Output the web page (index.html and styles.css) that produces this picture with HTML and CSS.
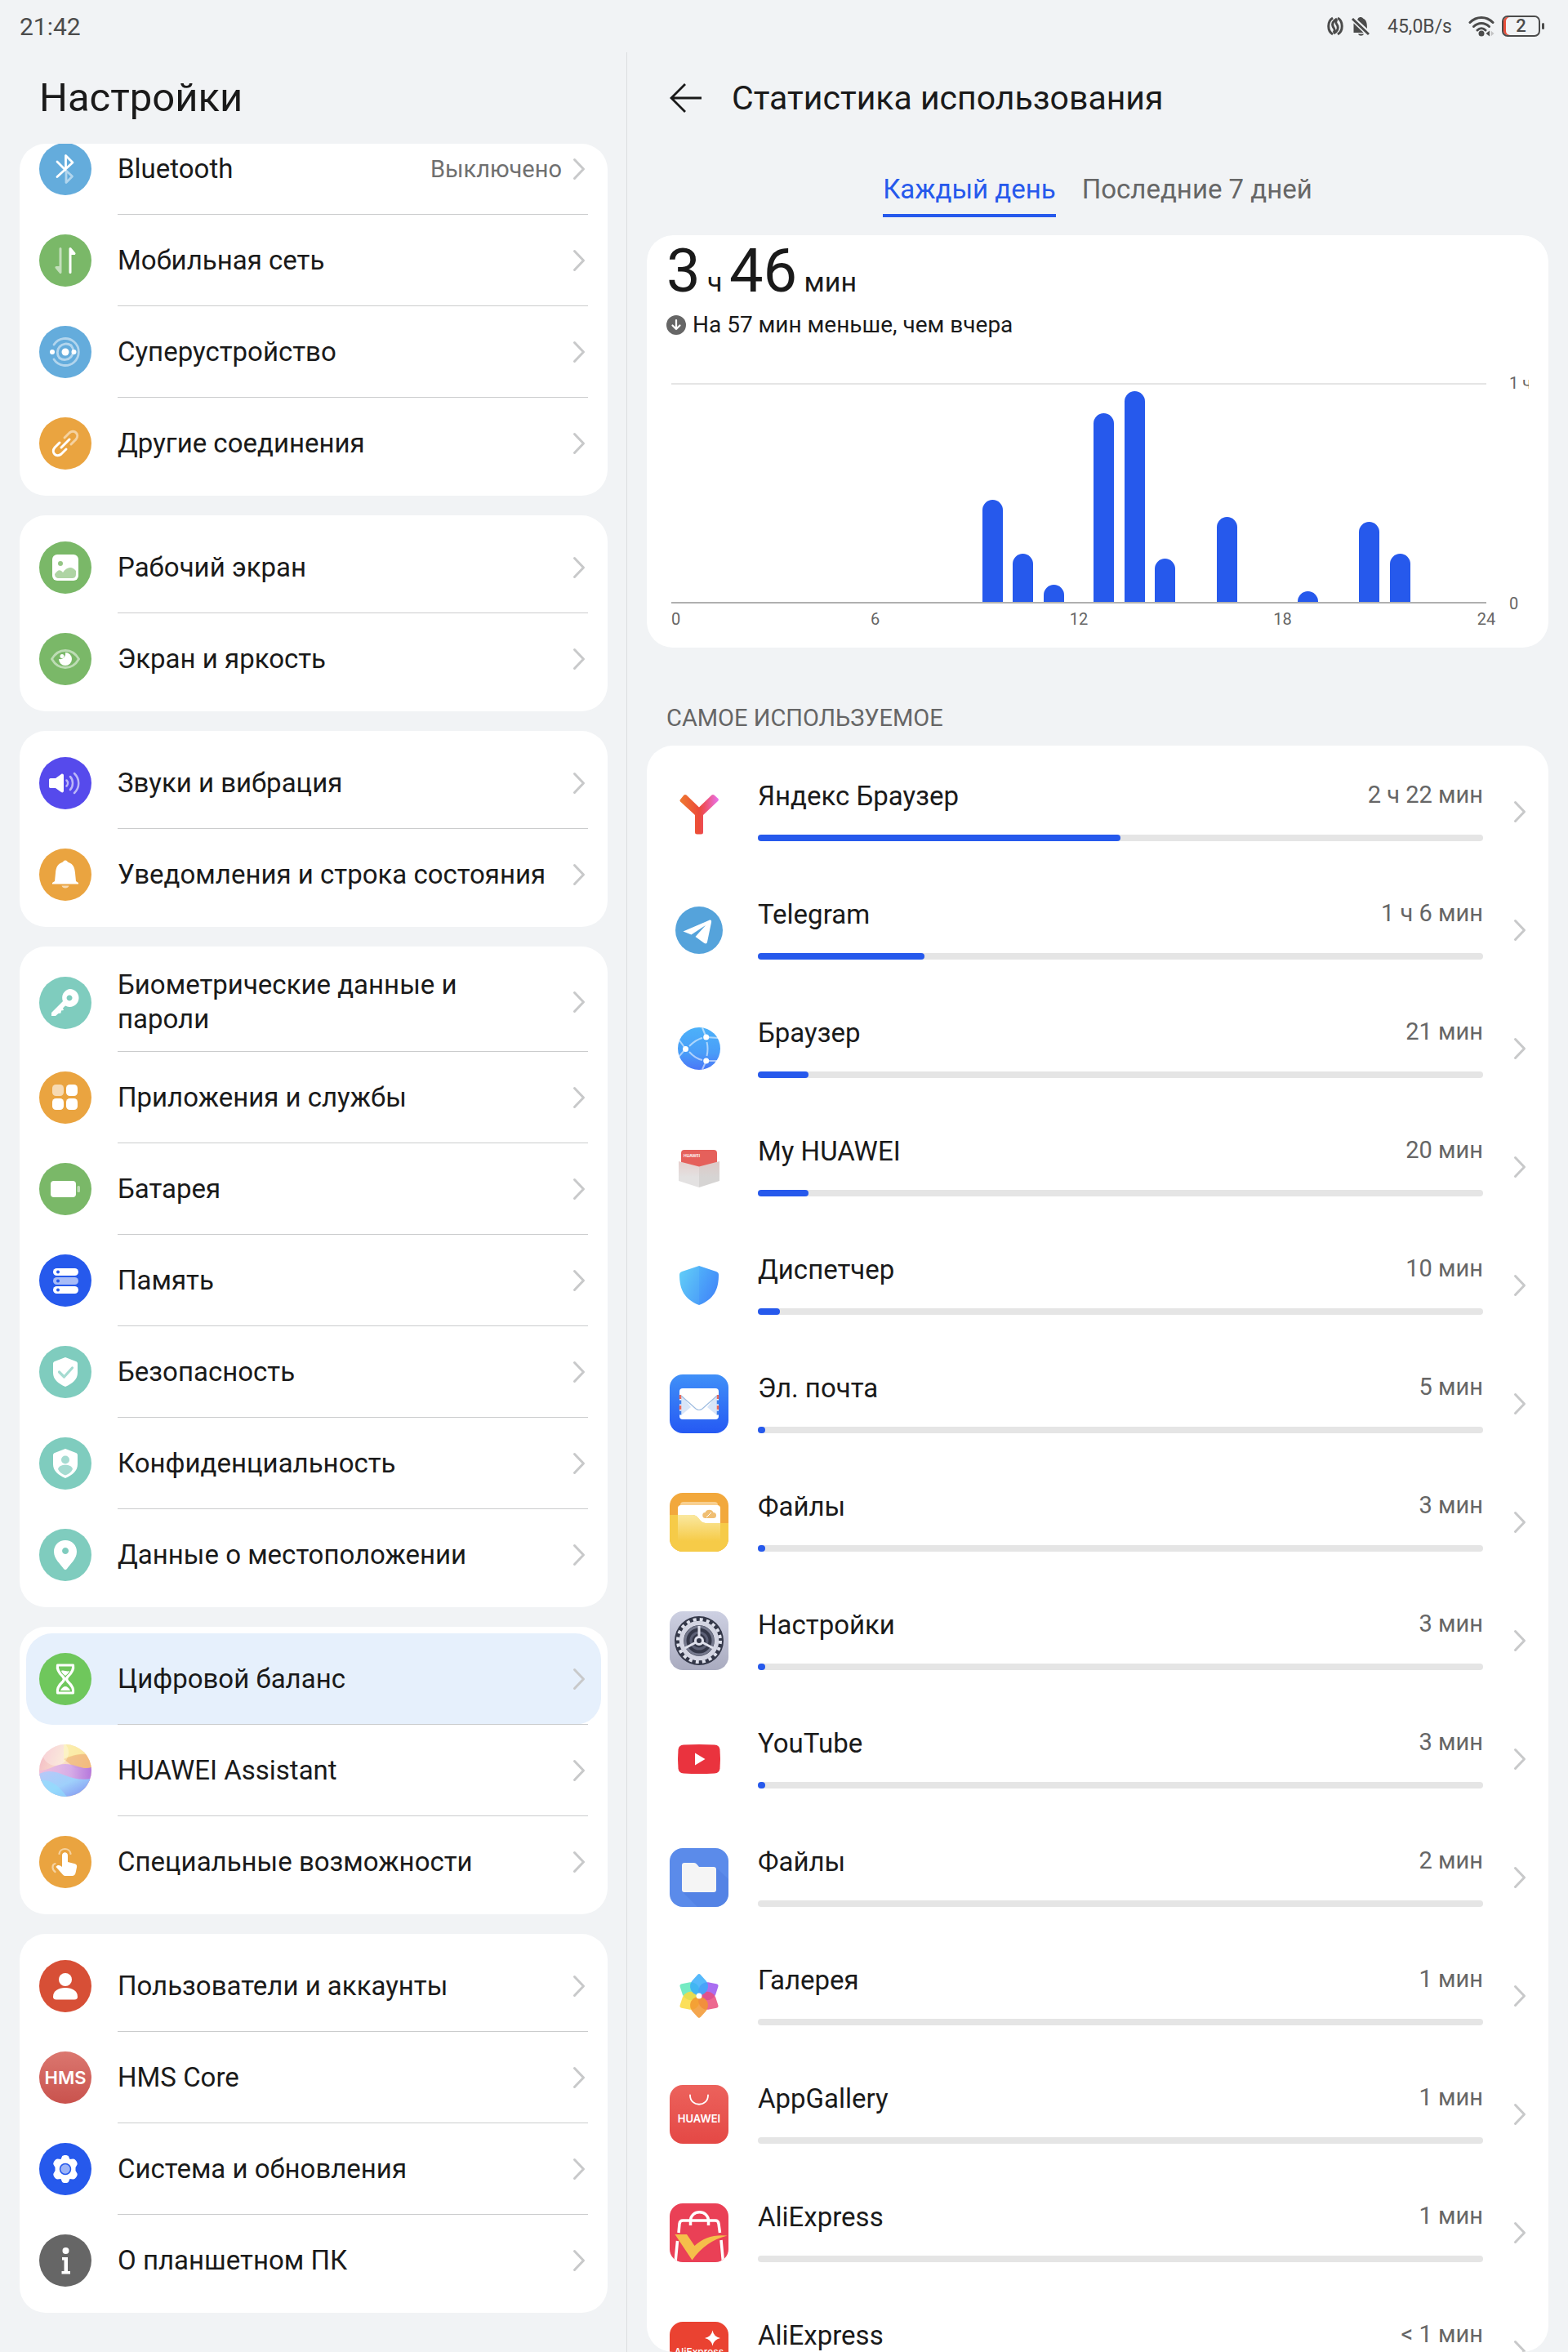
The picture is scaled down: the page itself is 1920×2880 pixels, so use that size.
FILE: index.html
```html
<!DOCTYPE html>
<html lang="ru">
    <head>
        <meta charset="utf-8">
        <meta name="viewport" content="width=device-width, initial-scale=1">
        <title>Настройки</title>
        <link rel="stylesheet" href="styles.css">
    </head>
    <body>
        <header class="status-bar">
            <div class="time">21:42</div>
            <div class="status-icons">
                <svg class="status-nfc" viewBox="0 0 20 24">
                    <path d="M7 2C0 6 0 18 7 22M13 2c7 4 7 16 0 20M12 3C7 6 6 9 7 12s4 4 1 8M8 21c5-3 6-6 5-9S9 8 12 4" fill="none" stroke="#4b4b4b" stroke-width="3"/>
                </svg>
                <svg class="status-bell" viewBox="0 0 22 24">
                    <path d="M2.500 20V8.500L14.500 20zM8 2.500c1-2 5-2 6 0 4 2 5 5 5 12.500L7 4zM8 21.500h7c-1 3-6 3-7 0z" fill="#4b4b4b"/>
                    <path d="M1 3l20 19" stroke="#4b4b4b" stroke-width="3"/>
                </svg>
                <div class="speed">45,0B/s</div>
                <svg class="status-wifi" viewBox="0 0 32 26">
                    <path d="M2 8.5c8-8 20-8 28 0M6.5 13.500c5.500-5.500 13.500-5.500 19 0M11 18c3-3 7-3 10 0" fill="none" stroke="#4b4b4b" stroke-width="3" stroke-linecap="round"/>
                    <circle cx="16" cy="22" r="3.500" fill="#4b4b4b"/>
                    <path d="M26 18.500v7L21.500 22z" fill="#4b4b4b"/>
                    <path d="M27.500 18.500v7L31.500 22z" fill="#c3c3c4"/>
                </svg>
                <div class="battery"><span>2</span></div>
            </div>
        </header>

        <div class="panes">
            <aside class="sidebar">
                <h1>Настройки</h1>
                <nav class="scroller">
                    <ul class="group scrolled">
                        <li><a href="#bluetooth" class="row">
                            <svg class="round" viewBox="0 0 64 64"><circle cx="32" cy="32" r="32" fill="#64acdc"/>
                                <g fill="none" stroke="#fff" stroke-width="2.800" stroke-linecap="round" stroke-linejoin="round"><path d="M22 23l10 10M22 41.500l19-17.500-8.500-8.500V31"/><path d="M33 34l7.500 7-7.500 7.500V36" opacity=".5"/></g></svg>
                            <span class="row-body"><span class="label">Bluetooth</span><span class="value">Выключено</span><svg class="chevron"><use href="#chevron"/></svg></span>
                        </a></li>
                        <li><a href="#mobile" class="row">
                            <svg class="round" viewBox="0 0 64 64"><circle cx="32" cy="32" r="32" fill="#7ab868"/>
                                <path d="M26 17.500v29l-5-6h5" fill="#fff" stroke="#fff" stroke-width="3" stroke-linecap="round" stroke-linejoin="round" opacity=".55"/>
                                <path d="M38 46.500v-29l5 6h-5" fill="#fff" stroke="#fff" stroke-width="3" stroke-linecap="round" stroke-linejoin="round"/></svg>
                            <span class="row-body"><span class="label">Мобильная сеть</span><svg class="chevron"><use href="#chevron"/></svg></span>
                        </a></li>
                        <li><a href="#super" class="row">
                            <svg class="round" viewBox="0 0 64 64"><circle cx="32" cy="32" r="32" fill="#64acdc"/>
                                <g fill="none" stroke="#fff" stroke-width="2.800" opacity=".5" stroke-linecap="round"><path d="M18 23a16.500 16.500 0 1 1 0 18"/><path d="M25 39.500a10.500 10.500 0 0 1 14-15.500"/><path d="M39 24a10.500 10.500 0 0 1-14 15.500"/></g>
                                <circle cx="32" cy="32" r="4.500" fill="#fff"/><circle cx="16" cy="32" r="3" fill="#fff"/><circle cx="42.500" cy="32" r="3" fill="#fff"/></svg>
                            <span class="row-body"><span class="label">Суперустройство</span><svg class="chevron"><use href="#chevron"/></svg></span>
                        </a></li>
                        <li><a href="#connections" class="row">
                            <svg class="round" viewBox="0 0 64 64"><circle cx="32" cy="32" r="32" fill="#eaa440"/>
                                <g fill="none" stroke="#fff" stroke-width="3" stroke-linecap="round"><path d="M31 25l6-6c6-5 13 2 8 8l-6 6" opacity=".5"/><path d="M25 31l-6 6c-5 6 2 13 8 8l6-6M27 37l10-10"/></g></svg>
                            <span class="row-body"><span class="label">Другие соединения</span><svg class="chevron"><use href="#chevron"/></svg></span>
                        </a></li>
                    </ul>

                    <ul class="group">
                        <li><a href="#desktop" class="row">
                            <svg class="round" viewBox="0 0 64 64"><circle cx="32" cy="32" r="32" fill="#7ab868"/>
                                <rect x="16" y="16" width="32" height="32" rx="6" fill="#fff"/><circle cx="26" cy="27" r="3" fill="#7ab868" opacity=".8"/>
                                <path d="M19 40c4-6 7-6 10-2 5-7 11-8 16-2v4c0 4-2 5-5 5H24c-3 0-5-2-5-5z" fill="#7ab868" opacity=".6"/></svg>
                            <span class="row-body"><span class="label">Рабочий экран</span><svg class="chevron"><use href="#chevron"/></svg></span>
                        </a></li>
                        <li><a href="#display" class="row">
                            <svg class="round" viewBox="0 0 64 64"><circle cx="32" cy="32" r="32" fill="#7ab868"/>
                                <path d="M15.500 32c8-14 25-14 33 0-8 14-25 14-33 0z" fill="none" stroke="#fff" stroke-width="2.800" opacity=".5"/>
                                <path d="M32 24a8 8 0 1 1-8 8c5 1 9-3 8-8z" fill="#fff"/><circle cx="28" cy="28.500" r="2.500" fill="#fff"/></svg>
                            <span class="row-body"><span class="label">Экран и яркость</span><svg class="chevron"><use href="#chevron"/></svg></span>
                        </a></li>
                    </ul>

                    <ul class="group">
                        <li><a href="#sound" class="row">
                            <svg class="round" viewBox="0 0 64 64"><circle cx="32" cy="32" r="32" fill="#564aec"/>
                                <path d="M14 26h6l7-5c1.500-1 3 0 3 1.500v19c0 1.500-1.500 2.500-3 1.500l-7-5h-6c-1.500 0-2-1-2-2v-8c0-1 .5-2 2-2z" fill="#fff"/>
                                <g fill="none" stroke="#fff" stroke-width="2.500" stroke-linecap="round" opacity=".6"><path d="M33.500 28.500c2 2 2 5 0 7M38 24c4 4 4 12 0 16M43 20c7 7 7 17 0 24"/></g></svg>
                            <span class="row-body"><span class="label">Звуки и вибрация</span><svg class="chevron"><use href="#chevron"/></svg></span>
                        </a></li>
                        <li><a href="#notifications" class="row">
                            <svg class="round" viewBox="0 0 64 64"><circle cx="32" cy="32" r="32" fill="#eaa440"/>
                                <path d="M32 14.500c2 0 2.500 2 4 2.500 6 2 7.500 7 8 13l1 10 3 2v1.500H16V42l3-2 1-10c.5-6 2-11 8-13 1.500-.5 2-2.500 4-2.500z" fill="#fff"/>
                                <path d="M27.500 45.500h9c-1 4-8 4-9 0z" fill="#fff" opacity=".6"/></svg>
                            <span class="row-body"><span class="label">Уведомления и строка состояния</span><svg class="chevron"><use href="#chevron"/></svg></span>
                        </a></li>
                    </ul>

                    <ul class="group">
                        <li><a href="#biometrics" class="row">
                            <svg class="round" viewBox="0 0 64 64"><circle cx="32" cy="32" r="32" fill="#7fccbe"/>
                                <path fill-rule="evenodd" d="M37 15a11 11 0 1 1-5 20.500L29 38.500l1 2.500-3 .5-.5 3-3 .5-3.500 3h-5v-4l14-14A11 11 0 0 1 37 15zm0 7.500a3.500 3.500 0 1 0 .1 0z" fill="#fff"/></svg>
                            <span class="row-body"><span class="label">Биометрические данные и<br>пароли</span><svg class="chevron"><use href="#chevron"/></svg></span>
                        </a></li>
                        <li><a href="#apps" class="row">
                            <svg class="round" viewBox="0 0 64 64"><circle cx="32" cy="32" r="32" fill="#eaa440"/>
                                <g fill="#fff"><rect x="16" y="16" width="14" height="14" rx="4.500" opacity=".6"/><rect x="33" y="16" width="14" height="14" rx="4.500"/><rect x="16" y="33" width="14" height="14" rx="4.500"/><rect x="33" y="33" width="14" height="14" rx="4.500"/></g></svg>
                            <span class="row-body"><span class="label">Приложения и службы</span><svg class="chevron"><use href="#chevron"/></svg></span>
                        </a></li>
                        <li><a href="#battery" class="row">
                            <svg class="round" viewBox="0 0 64 64"><circle cx="32" cy="32" r="32" fill="#7ab868"/>
                                <rect x="14" y="22" width="31" height="20" rx="4" fill="#fff"/><rect x="46.500" y="28" width="3.500" height="8" rx="1.500" fill="#fff" opacity=".5"/></svg>
                            <span class="row-body"><span class="label">Батарея</span><svg class="chevron"><use href="#chevron"/></svg></span>
                        </a></li>
                        <li><a href="#storage" class="row">
                            <svg class="round" viewBox="0 0 64 64"><circle cx="32" cy="32" r="32" fill="#2659ec"/>
                                <g fill="#fff"><rect x="17" y="17" width="31" height="9" rx="4.500"/><rect x="17" y="28" width="31" height="9" rx="4.500" opacity=".6"/><rect x="17" y="39" width="31" height="9" rx="4.500"/></g>
                                <g fill="#2659ec"><circle cx="23" cy="21.500" r="2"/><circle cx="23" cy="32.500" r="2"/><circle cx="23" cy="43.500" r="2"/></g></svg>
                            <span class="row-body"><span class="label">Память</span><svg class="chevron"><use href="#chevron"/></svg></span>
                        </a></li>
                        <li><a href="#security" class="row">
                            <svg class="round" viewBox="0 0 64 64"><circle cx="32" cy="32" r="32" fill="#7fccbe"/>
                                <path d="M32 14l13 5c1.500.5 2 1.500 2 3v11c0 8-6 13-15 17-9-4-15-9-15-17V22c0-1.500.5-2.500 2-3z" fill="#fff"/>
                                <path d="M24.500 32l6 6 10-11" fill="none" stroke="#a5dbd1" stroke-width="3.200" stroke-linecap="round" stroke-linejoin="round"/></svg>
                            <span class="row-body"><span class="label">Безопасность</span><svg class="chevron"><use href="#chevron"/></svg></span>
                        </a></li>
                        <li><a href="#privacy" class="row">
                            <svg class="round" viewBox="0 0 64 64"><circle cx="32" cy="32" r="32" fill="#7fccbe"/>
                                <path d="M32 14l13 5c1.500.5 2 1.500 2 3v11c0 8-6 13-15 17-9-4-15-9-15-17V22c0-1.500.5-2.500 2-3z" fill="#fff"/>
                                <circle cx="32" cy="27.500" r="5" fill="#a5dbd1"/><path d="M23 39c1-7 17-7 18 0-2 4-5 6-9 7.500-4-1.500-7-3.500-9-7.500z" fill="#a5dbd1"/></svg>
                            <span class="row-body"><span class="label">Конфиденциальность</span><svg class="chevron"><use href="#chevron"/></svg></span>
                        </a></li>
                        <li><a href="#location" class="row">
                            <svg class="round" viewBox="0 0 64 64"><circle cx="32" cy="32" r="32" fill="#7fccbe"/>
                                <path fill-rule="evenodd" d="M32 14c8 0 14 6 14 14 0 9-8 15-12 21-1 1.500-3 1.500-4 0-4-6-12-12-12-21 0-8 6-14 14-14zm0 9a4 4 0 1 0 .1 0z" fill="#fff"/></svg>
                            <span class="row-body"><span class="label">Данные о местоположении</span><svg class="chevron"><use href="#chevron"/></svg></span>
                        </a></li>
                    </ul>

                    <ul class="group">
                        <li><a href="#balance" class="row active" aria-current="page">
                            <svg class="round" viewBox="0 0 64 64"><circle cx="32" cy="32" r="32" fill="#6fc75c"/>
                                <path d="M22.500 15h19c1 5-1 9-6.500 14-2 2-2 4 0 6 5.500 5 7.500 9 6.500 14h-19c-1-5 1-9 6.500-14 2-2 2-4 0-6-5.500-5-7.500-9-6.500-14z" fill="none" stroke="#fff" stroke-width="3.200" stroke-linejoin="round"/>
                                <path d="M27 22c3-1.500 7 1.500 10 0-1 3-3 4-5 6-2-2-4-3-5-6zM26 46c1-3 4-5 6-5s5 2 6 5z" fill="#fff"/></svg>
                            <span class="row-body"><span class="label">Цифровой баланс</span><svg class="chevron"><use href="#chevron"/></svg></span>
                        </a></li>
                        <li><a href="#assistant" class="row">
                            <svg class="round" viewBox="0 0 64 64">
                                <defs>
                                    <clipPath id="ball"><circle cx="32" cy="32" r="32"/></clipPath>
                                    <linearGradient id="sky" x1="0" y1="0" x2="1" y2=".4"><stop offset="0" stop-color="#f3b6c6"/><stop offset=".5" stop-color="#f9e0cc"/><stop offset="1" stop-color="#f7c08a"/></linearGradient>
                                    <linearGradient id="wave" x1="0" y1="0" x2="1" y2="0"><stop offset="0" stop-color="#f0bcdc"/><stop offset=".6" stop-color="#cda2f4"/><stop offset="1" stop-color="#a566f2"/></linearGradient>
                                    <linearGradient id="sea" x1="0" y1="0" x2="1" y2="1"><stop offset="0" stop-color="#b9c8f8"/><stop offset=".5" stop-color="#9fd0fb"/><stop offset="1" stop-color="#7f8df0"/></linearGradient>
                                </defs>
                                <g clip-path="url(#ball)">
                                    <path d="M0 0h64v64H0z" fill="url(#sky)"/>
                                    <path d="M30 0h34v14c-12-4-26 0-34 8z" fill="#fbf0a4" opacity=".8"/>
                                    <path d="M30 18c10-5 24-8 34-5v16H44z" fill="#f0b878" opacity=".7"/>
                                    <circle cx="20" cy="10" r="16" fill="#fff" opacity=".3"/>
                                    <path d="M0 32c12 0 20-8 32-8s22 8 32 4v26H0z" fill="url(#wave)" opacity=".8"/>
                                    <path d="M0 36c12-6 22-2 32 2s20 6 32 4v22H0z" fill="url(#sea)"/>
                                    <path d="M0 44c12-2 22 4 34 20H0z" fill="#8fe0fd" opacity=".6"/>
                                </g></svg>
                            <span class="row-body"><span class="label">HUAWEI Assistant</span><svg class="chevron"><use href="#chevron"/></svg></span>
                        </a></li>
                        <li><a href="#accessibility" class="row">
                            <svg class="round" viewBox="0 0 64 64"><circle cx="32" cy="32" r="32" fill="#eaa440"/>
                                <path d="M28 24c0-5 7-5 7 0v8l8 2c2.500.5 3.500 2 3 4.500l-1.500 7c-.5 2-2 3.500-4 3.500h-8c-2 0-3-.5-4-2l-8-9c2-3 5-2 7.500 0z" fill="#fff"/>
                                <path d="M24.500 22c1-8 13-8 14 0M19.500 34c-4 1-4 7 0 10" fill="none" stroke="#fff" stroke-width="2.200" stroke-linecap="round" opacity=".5"/></svg>
                            <span class="row-body"><span class="label">Специальные возможности</span><svg class="chevron"><use href="#chevron"/></svg></span>
                        </a></li>
                    </ul>

                    <ul class="group">
                        <li><a href="#users" class="row">
                            <svg class="round" viewBox="0 0 64 64"><circle cx="32" cy="32" r="32" fill="#d74f36"/>
                                <circle cx="32" cy="24" r="8" fill="#fff"/><path d="M17 45c0-7 6-11 15-11s15 4 15 11c0 2-1 3.500-4 3.500H21c-3 0-4-1.500-4-3.500z" fill="#fff"/></svg>
                            <span class="row-body"><span class="label">Пользователи и аккаунты</span><svg class="chevron"><use href="#chevron"/></svg></span>
                        </a></li>
                        <li><a href="#hms" class="row">
                            <svg class="round" viewBox="0 0 64 64">
                                <defs><linearGradient id="hms-red" x1="0" y1="0" x2="0" y2="1"><stop offset="0" stop-color="#db776f"/><stop offset="1" stop-color="#c9524d"/></linearGradient></defs>
                                <circle cx="32" cy="32" r="32" fill="url(#hms-red)"/>
                                <text x="32" y="40" class="hms-text" text-anchor="middle">HMS</text></svg>
                            <span class="row-body"><span class="label">HMS Core</span><svg class="chevron"><use href="#chevron"/></svg></span>
                        </a></li>
                        <li><a href="#system" class="row">
                            <svg class="round" viewBox="0 0 64 64"><circle cx="32" cy="32" r="32" fill="#2659ec"/>
                                <path d="M28 16.500c1-2 7-2 8 0l1.500 3.500 4-.5c3 0 6 5 5 7l-2 3.500v4l2 3.500c1 2-2 7-5 7l-4-.5-1.500 3.500c-1 2-7 2-8 0L26.500 44l-4 .5c-3 0-6-5-5-7l2-3.500v-4l-2-3.500c-1-2 2-7 5-7l4 .5z" fill="#fff"/>
                                <circle cx="32" cy="32" r="6.500" fill="#9db4f7" stroke="#2659ec" stroke-width="1.500"/></svg>
                            <span class="row-body"><span class="label">Система и обновления</span><svg class="chevron"><use href="#chevron"/></svg></span>
                        </a></li>
                        <li><a href="#about" class="row">
                            <svg class="round" viewBox="0 0 64 64"><circle cx="32" cy="32" r="32" fill="#666"/>
                                <circle cx="32.500" cy="20" r="4" fill="#fff"/><path d="M28 28h7v17h3v3.500H27.500V45h3V31.500H28z" fill="#fff"/></svg>
                            <span class="row-body"><span class="label">О планшетном ПК</span><svg class="chevron"><use href="#chevron"/></svg></span>
                        </a></li>
                    </ul>
                </nav>
            </aside>

            <main class="content">
                <div class="title-bar">
                    <button class="back" aria-label="Назад">
                        <svg viewBox="0 0 40 40"><path d="M39 20H2M19 3L2 20l17 17" fill="none" stroke="#1a1a1a" stroke-width="2.800"/></svg>
                    </button>
                    <h2>Статистика использования</h2>
                </div>
                <div class="tabs">
                    <button class="tab selected">Каждый день</button>
                    <button class="tab">Последние 7 дней</button>
                </div>

                <div class="scroller">
                    <section class="card summary">
                        <p class="total"><b>3</b> ч <b>46</b> мин</p>
                        <p class="compare">
                            <svg viewBox="0 0 24 24"><circle cx="12" cy="12" r="12" fill="#666"/><path d="M12 6v11M7.500 12.500L12 17l4.500-4.500" fill="none" stroke="#fff" stroke-width="2.200" stroke-linecap="round" stroke-linejoin="round"/></svg>
                            На 57 мин меньше, чем вчера
                        </p>
                        <div class="chart">
                            <div class="plot">
                                <div class="quarter"></div>
                                <div class="quarter"><i></i><i></i><i></i><i style="height:47%"></i><i style="height:22%"></i><i style="height:8%"></i></div>
                                <div class="quarter"><i style="height:87%"></i><i style="height:97%"></i><i style="height:20%"></i><i></i><i style="height:39%"></i><i></i></div>
                                <div class="quarter"><i style="height:5%"></i><i></i><i style="height:37%"></i><i style="height:22%"></i><i></i><i></i></div>
                            </div>
                            <div class="y-axis"><span>1 ч</span><span>0</span></div>
                            <div class="x-axis"><span>0</span><span>6</span><span>12</span><span>18</span><span>24</span></div>
                        </div>
                    </section>

                    <h3>САМОЕ ИСПОЛЬЗУЕМОЕ</h3>

                    <ul class="card apps">
                        <li><a href="#" class="app">
                            <svg class="app-icon" viewBox="0 0 72 72">
                                <defs><linearGradient id="ya" x1="12" y1="0" x2="60" y2="0" gradientUnits="userSpaceOnUse"><stop offset="0" stop-color="#ee7a2f"/><stop offset=".5" stop-color="#ec4a38"/><stop offset=".65" stop-color="#ee5068"/><stop offset="1" stop-color="#e873ee"/></linearGradient></defs>
                                <path d="M13 21l4.500-5.500q1.500-1 3 0L36 30.500l15.500-15q1.500-1 3 0L59.500 20q1 1.500-.5 3L41 40v21q0 2.500-2.500 2.500h-5Q31 63.500 31 61V40L13 23.500q-1-1.500 0-2.500z" fill="url(#ya)"/></svg>
                            <div class="app-body"><div class="app-line"><span class="app-name">Яндекс Браузер</span><span class="app-time">2 ч 22 мин</span></div><div class="bar"><div style="width:50%"></div></div></div>
                            <svg class="chevron"><use href="#chevron"/></svg>
                        </a></li>
                        <li><a href="#" class="app">
                            <svg class="app-icon" viewBox="0 0 72 72"><circle cx="36" cy="36" r="29" fill="#55a3db"/>
                                <path d="M16.500 37.500L48 24c2.500-1 3.500 0 3 2.500l-5 24c-.5 2-1.500 2.500-3.500 1.500L31.500 44 44 30 26.500 41.500z" fill="#fff"/></svg>
                            <div class="app-body"><div class="app-line"><span class="app-name">Telegram</span><span class="app-time">1 ч 6 мин</span></div><div class="bar"><div style="width:23%"></div></div></div>
                            <svg class="chevron"><use href="#chevron"/></svg>
                        </a></li>
                        <li><a href="#" class="app">
                            <svg class="app-icon" viewBox="0 0 72 72">
                                <defs><linearGradient id="globe" x1="0" y1="0" x2="0" y2="1"><stop offset="0" stop-color="#4cb1f9"/><stop offset=".6" stop-color="#499df8"/><stop offset="1" stop-color="#4a76f7"/></linearGradient></defs>
                                <circle cx="36" cy="36" r="26" fill="url(#globe)"/>
                                <path d="M40 10.500l4.700 11.500L60 23M12 26l7.500 10.500L11 46M40 61.500L44.700 51 60 51M24 33q8-8 16-10M24 40q7 8 16 10M45.500 28q2 8 0 17" fill="none" stroke="#fff" stroke-width="2" opacity=".55"/>
                                <circle cx="19.500" cy="36.500" r="3.500" fill="#fff"/><circle cx="44.700" cy="22" r="3.500" fill="#fff"/><circle cx="44.700" cy="51" r="3.500" fill="#fff"/></svg>
                            <div class="app-body"><div class="app-line"><span class="app-name">Браузер</span><span class="app-time">21 мин</span></div><div class="bar"><div style="width:7%"></div></div></div>
                            <svg class="chevron"><use href="#chevron"/></svg>
                        </a></li>
                        <li><a href="#" class="app">
                            <svg class="app-icon" viewBox="0 0 72 72">
                                <defs><linearGradient id="box-l" x1="0" y1="0" x2="0" y2="1"><stop offset="0" stop-color="#e6cfcd"/><stop offset=".6" stop-color="#e3e1e1"/></linearGradient><linearGradient id="box-r" x1="0" y1="0" x2="0" y2="1"><stop offset="0" stop-color="#dec9c7"/><stop offset=".6" stop-color="#d6d4d3"/></linearGradient></defs>
                                <rect x="14" y="15" width="44" height="24" rx="4" fill="#e5605b"/>
                                <text x="17" y="24" class="box-text">HUAWEI</text>
                                <path d="M11 29l25 6.500V61l-25-8z" fill="url(#box-l)"/><path d="M61 29l-25 6.500V61l25-8z" fill="url(#box-r)"/></svg>
                            <div class="app-body"><div class="app-line"><span class="app-name">My HUAWEI</span><span class="app-time">20 мин</span></div><div class="bar"><div style="width:7%"></div></div></div>
                            <svg class="chevron"><use href="#chevron"/></svg>
                        </a></li>
                        <li><a href="#" class="app">
                            <svg class="app-icon" viewBox="0 0 72 72">
                                <defs><linearGradient id="sh-l" x1="0" y1="0" x2="1" y2="1"><stop offset="0" stop-color="#62d0f8"/><stop offset="1" stop-color="#4c9ff8"/></linearGradient><linearGradient id="sh-r" x1="0" y1="0" x2="1" y2="1"><stop offset="0" stop-color="#50b0fa"/><stop offset="1" stop-color="#3f7ff8"/></linearGradient></defs>
                                <path d="M36 12L15 19q-3 1-3 4c0 18 6 30 24 37z" fill="url(#sh-l)"/><path d="M36 12l21 7q3 1 3 4c0 18-6 30-24 37z" fill="url(#sh-r)"/></svg>
                            <div class="app-body"><div class="app-line"><span class="app-name">Диспетчер</span><span class="app-time">10 мин</span></div><div class="bar"><div style="width:3%"></div></div></div>
                            <svg class="chevron"><use href="#chevron"/></svg>
                        </a></li>
                        <li><a href="#" class="app">
                            <svg class="app-icon" viewBox="0 0 72 72">
                                <defs><linearGradient id="mail" x1="0" y1="0" x2="0" y2="1"><stop offset="0" stop-color="#4090f8"/><stop offset="1" stop-color="#2559f3"/></linearGradient></defs>
                                <rect width="72" height="72" rx="16" fill="url(#mail)"/>
                                <rect x="12" y="17" width="48" height="38" rx="4" fill="#fff"/>
                                <path d="M14 25l12 15-12 10zM58 25L46 40l12 10z" fill="#d8e5f8"/>
                                <path d="M13 25v26M59 25v26" stroke="#e8695c" stroke-width="2.500" stroke-dasharray="5 8"/><path d="M13 31.500v20M59 31.500v20" stroke="#3f7ee8" stroke-width="2.500" stroke-dasharray="5 8"/>
                                <path d="M13 24l19 18q4 3 8 0l19-18v-3H13z" fill="#fff"/><path d="M14 26l18 16q4 3 8 0l18-16" fill="none" stroke="#9dbbe0" stroke-width="1.200"/></svg>
                            <div class="app-body"><div class="app-line"><span class="app-name">Эл. почта</span><span class="app-time">5 мин</span></div><div class="bar"><div style="width:1%"></div></div></div>
                            <svg class="chevron"><use href="#chevron"/></svg>
                        </a></li>
                        <li><a href="#" class="app">
                            <svg class="app-icon" viewBox="0 0 72 72">
                                <defs><clipPath id="tile"><rect width="72" height="72" rx="16"/></clipPath><linearGradient id="front" x1="0" y1="0" x2="0" y2="1"><stop offset="0" stop-color="#fae8a0"/><stop offset="1" stop-color="#f6cb48"/></linearGradient></defs>
                                <g clip-path="url(#tile)">
                                    <path d="M0 0h72v72H0z" fill="#f2a83c"/>
                                    <rect x="13" y="11" width="46" height="20" rx="4" fill="#f8cf90"/><rect x="10" y="15" width="52" height="30" rx="4" fill="#fff"/>
                                    <path d="M44 31a3.500 3.500 0 0 1-.5-7 5.500 5.500 0 0 1 10 0 3.500 3.500 0 0 1 0 7z" fill="#f0be72"/><path d="M45 30l6-6" stroke="#fff"/>
                                    <path d="M0 27h28c8 0 8 10 16 10h28v35H0z" fill="#f6cb48"/>
                                    <path d="M10 27h18c8 0 8 10 16 10h18v22H10z" fill="url(#front)"/>
                                </g></svg>
                            <div class="app-body"><div class="app-line"><span class="app-name">Файлы</span><span class="app-time">3 мин</span></div><div class="bar"><div style="width:1%"></div></div></div>
                            <svg class="chevron"><use href="#chevron"/></svg>
                        </a></li>
                        <li><a href="#" class="app">
                            <svg class="app-icon" viewBox="0 0 72 72">
                                <defs><linearGradient id="steel" x1="0" y1="0" x2="0" y2="1"><stop offset="0" stop-color="#cdd0e2"/><stop offset="1" stop-color="#a9abbf"/></linearGradient></defs>
                                <rect width="72" height="72" rx="16" fill="url(#steel)"/>
                                <circle cx="36" cy="36" r="30" fill="#343849"/>
                                <circle cx="36" cy="36" r="26" fill="none" stroke="#dfe1ec" stroke-width="4" stroke-dasharray="4 4.168"/>
                                <circle cx="36" cy="36" r="21.500" fill="none" stroke="#d3d5e2" stroke-width="5.500"/>
                                <circle cx="36" cy="36" r="17" fill="none" stroke="#74788c" stroke-width="3"/>
                                <circle cx="36" cy="36" r="10" fill="none" stroke="#5c6075" stroke-width="3"/>
                                <path d="M36 36V18M36 36l-17 9M36 36l17 9" stroke="#dfe1ec" stroke-width="3"/>
                                <circle cx="36" cy="36" r="4.500" fill="#343849" stroke="#dfe1ec" stroke-width="3"/></svg>
                            <div class="app-body"><div class="app-line"><span class="app-name">Настройки</span><span class="app-time">3 мин</span></div><div class="bar"><div style="width:1%"></div></div></div>
                            <svg class="chevron"><use href="#chevron"/></svg>
                        </a></li>
                        <li><a href="#" class="app">
                            <svg class="app-icon" viewBox="0 0 72 72"><path d="M17 18.500q19-1 38 0 6 .5 6.500 6 1 11.500 0 23-.5 5.500-6.500 6-19 1-38 0-6-.5-6.500-6-1-11.500 0-23 .5-5.500 6.500-6z" fill="#ea333e"/><path d="M31 28.500v15L43.500 36z" fill="#fff"/></svg>
                            <div class="app-body"><div class="app-line"><span class="app-name">YouTube</span><span class="app-time">3 мин</span></div><div class="bar"><div style="width:1%"></div></div></div>
                            <svg class="chevron"><use href="#chevron"/></svg>
                        </a></li>
                        <li><a href="#" class="app">
                            <svg class="app-icon" viewBox="0 0 72 72"><g clip-path="url(#tile)"><path d="M0 0h72v72H0z" fill="#5b8bea"/><path d="M57 24l15 14v34H34L16 54z" fill="#4d7cdf" opacity=".5"/></g>
                                <path d="M18 18h12q2 0 3 1.500l3 3.500h18q3 0 3 3v25q0 3-3 3H18q-3 0-3-3V21q0-3 3-3z" fill="#f5f5f5"/></svg>
                            <div class="app-body"><div class="app-line"><span class="app-name">Файлы</span><span class="app-time">2 мин</span></div><div class="bar"><div style="width:0%"></div></div></div>
                            <svg class="chevron"><use href="#chevron"/></svg>
                        </a></li>
                        <li><a href="#" class="app">
                            <svg class="app-icon" viewBox="0 0 72 72">
                                <defs><path id="petal" d="M34 10.200Q36 8 38 10.200l7 7.800a11 11 0 1 1-18 0z" opacity=".85"/></defs>
                                <use href="#petal" fill="#5de8b8" transform="rotate(-60 36 36)"/><use href="#petal" fill="#9b55ee" transform="rotate(60 36 36)"/>
                                <use href="#petal" fill="#fbd93c" transform="rotate(-120 36 36)"/><use href="#petal" fill="#ea4d7c" transform="rotate(120 36 36)"/>
                                <use href="#petal" fill="#f2962f" transform="rotate(180 36 36)"/><use href="#petal" fill="#38adfa"/>
                                <circle cx="36" cy="36" r="3.500" fill="#fff"/></svg>
                            <div class="app-body"><div class="app-line"><span class="app-name">Галерея</span><span class="app-time">1 мин</span></div><div class="bar"><div style="width:0%"></div></div></div>
                            <svg class="chevron"><use href="#chevron"/></svg>
                        </a></li>
                        <li><a href="#" class="app">
                            <svg class="app-icon" viewBox="0 0 72 72">
                                <defs><linearGradient id="gallery" x1="0" y1="0" x2="0" y2="1"><stop offset="0" stop-color="#ec625c"/><stop offset="1" stop-color="#e44845"/></linearGradient></defs>
                                <rect width="72" height="72" rx="16" fill="url(#gallery)"/><path d="M25 12.500c0 15 22 15 22 0" fill="none" stroke="#fff" stroke-width="1.800" stroke-linecap="round"/>
                                <text x="36" y="46" class="gallery-text" text-anchor="middle">HUAWEI</text></svg>
                            <div class="app-body"><div class="app-line"><span class="app-name">AppGallery</span><span class="app-time">1 мин</span></div><div class="bar"><div style="width:0%"></div></div></div>
                            <svg class="chevron"><use href="#chevron"/></svg>
                        </a></li>
                        <li><a href="#" class="app">
                            <svg class="app-icon" viewBox="0 0 72 72"><g clip-path="url(#tile)"><path d="M0 0h72v72H0z" fill="#ea4056"/>
                                <path d="M11 36l1-11q.5-4 4-4h40q3.500 0 4 4l1.500 11M9.500 46L7 72M63 45l2.500 27M25.500 27v-5c0-15 22-15 22 0v5" fill="none" stroke="#fff" stroke-width="3.500"/>
                                <path d="M6.500 38H21l9.500 14Q46 37 70.500 39.500 44 46 27.500 69.500z" fill="#f5bf4a"/></g></svg>
                            <div class="app-body"><div class="app-line"><span class="app-name">AliExpress</span><span class="app-time">1 мин</span></div><div class="bar"><div style="width:0%"></div></div></div>
                            <svg class="chevron"><use href="#chevron"/></svg>
                        </a></li>
                        <li><a href="#" class="app">
                            <svg class="app-icon" viewBox="0 0 72 72"><rect width="72" height="72" rx="16" fill="#ea4231"/>
                                <path d="M52.500 10.500q1.500 8 9.500 9.500-8 1.500-9.500 9.500-1.500-8-9.500-9.500 8-1.500 9.500-9.500z" fill="#fff"/>
                                <text x="36" y="41" class="ali-text" text-anchor="middle">AliExpress</text></svg>
                            <div class="app-body"><div class="app-line"><span class="app-name">AliExpress</span><span class="app-time">&lt; 1 мин</span></div><div class="bar"><div style="width:0%"></div></div></div>
                            <svg class="chevron"><use href="#chevron"/></svg>
                        </a></li>
                    </ul>
                </div>
            </main>
        </div>

        <svg class="sprite">
            <symbol id="chevron" viewBox="0 0 24 32"><path d="M7.500 4.500L18.500 16l-11 11.500" fill="none" stroke="#c8c9ca" stroke-width="3" stroke-linecap="round" stroke-linejoin="round"/></symbol>
        </svg>
    </body>
</html>
```
FILE: styles.css
```css
*{
    box-sizing: border-box;
}
body{
    margin: 0;
    height: 100vh;
    display: flex;
    flex-direction: column;
    overflow: hidden;
    background: #f1f3f5;
    color: #1a1a1a;
    font-family: Roboto, "Noto Sans", sans-serif;
    font-size: 33px;
}
h1, h2, h3, p, ul{
    margin: 0;
    padding: 0;
    font-weight: 400;
}
ul{
    list-style: none;
}
a{
    color: inherit;
    text-decoration: none;
}
button{
    border: 0;
    padding: 0;
    background: none;
    font: inherit;
    color: inherit;
}
svg{
    display: block;
    flex: none;
}
.sprite{
    width: 0;
    height: 0;
}

/* status bar */
.status-bar{
    flex: none;
    height: 64px;
    padding: 0 28px 0 24px;
    display: flex;
    align-items: center;
    justify-content: space-between;
    color: #4b4b4b;
}
.time{
    font-size: 30px;
}
.status-icons{
    display: flex;
    align-items: center;
}
.status-nfc{
    width: 20px;
    height: 24px;
    margin-right: 10px;
}
.status-bell{
    width: 22px;
    height: 24px;
    margin-right: 22px;
}
.speed{
    font-size: 23px;
    margin-right: 20px;
}
.status-wifi{
    width: 32px;
    height: 26px;
    margin-right: 9px;
}
.battery{
    position: relative;
    width: 47px;
    height: 26px;
    margin-right: 6px;
    border: 2px solid #4b4b4b;
    border-radius: 7px;
    box-shadow: inset 3px 0 0 #e8503c;
    font-size: 22px;
    font-weight: 500;
    line-height: 22px;
    text-align: center;
}
.battery::after{
    content: "";
    position: absolute;
    right: -7px;
    top: 7px;
    width: 3px;
    height: 8px;
    border-radius: 2px;
    background: #4b4b4b;
}

.panes{
    flex: 1;
    min-height: 0;
    display: flex;
}
.scroller{
    flex: 1;
    min-height: 0;
    overflow: hidden;
}

/* left pane */
.sidebar{
    width: 40%;
    padding: 0 23px 0 24px;
    border-right: 1px solid #dcdee0;
    display: flex;
    flex-direction: column;
}
.sidebar h1{
    flex: none;
    padding-left: 24px;
    font-size: 49px;
    line-height: 112px;
}
.sidebar .scroller{
    border-radius: 32px 32px 0 0;
}
.group{
    margin-bottom: 24px;
    padding: 8px;
    border-radius: 32px;
    background: #fff;
}
.scrolled{
    margin-top: -33px;
}
.row{
    display: flex;
    align-items: center;
    gap: 32px;
    padding: 0 16px;
    border-radius: 32px;
}
.active{
    background: #e6f0fc;
}
.round{
    width: 64px;
    height: 64px;
}
.row-body{
    flex: 1;
    min-height: 112px;
    padding: 18px 0;
    display: flex;
    align-items: center;
    border-bottom: 1px solid #cbcccd;
}
.group li:last-child .row-body{
    border-bottom-color: transparent;
}
.label{
    flex: 1;
    line-height: 42px;
}
.value{
    margin-right: 8px;
    font-size: 29px;
    color: #707070;
}
.chevron{
    width: 24px;
    height: 32px;
}
.hms-text{
    font: 600 22px Inter, sans-serif;
    fill: #fff;
}

/* right pane */
.content{
    flex: 1;
    min-width: 0;
    padding: 0 24px;
    display: flex;
    flex-direction: column;
}
.title-bar{
    height: 112px;
    padding-left: 28px;
    display: flex;
    align-items: center;
    gap: 36px;
}
.back svg{
    width: 40px;
    height: 40px;
}
.title-bar h2{
    font-size: 41px;
}
.tabs{
    height: 112px;
    padding-top: 36px;
    display: flex;
    align-items: flex-start;
    justify-content: center;
    gap: 32px;
}
.tab{
    padding-bottom: 10px;
    border-bottom: 4px solid transparent;
    line-height: 40px;
    color: #666;
}
.selected{
    border-bottom-color: #2659ec;
    color: #2659ec;
}
.content .scroller{
    border-radius: 32px;
}
.card{
    border-radius: 32px;
    background: #fff;
}
.summary{
    padding: 0 24px 23px;
}
.total{
    font-size: 34px;
    line-height: 40px;
}
.total b{
    font-size: 74px;
    font-weight: 400;
    line-height: 88px;
}
.compare{
    display: flex;
    align-items: center;
    gap: 8px;
    font-size: 28px;
    line-height: 44px;
}
.compare svg{
    width: 24px;
    height: 24px;
}
.chart{
    margin-top: 49px;
    padding-left: 6px;
    display: grid;
    grid-template-columns: 1fr 52px;
    font-size: 20px;
    line-height: 24px;
    color: #666;
}
.plot{
    height: 270px;
    display: flex;
    border-top: 2px solid #e5e5e5;
    border-bottom: 2px solid #b0b0b0;
}
.quarter{
    flex: 1;
    padding: 0 18px;
    display: flex;
    align-items: flex-end;
    justify-content: space-between;
}
.quarter i{
    width: 25px;
    border-radius: 13px 13px 0 0;
    background: #2659ec;
}
.y-axis{
    margin: -12px 0;
    padding-left: 28px;
    display: flex;
    flex-direction: column;
    justify-content: space-between;
    overflow: hidden;
    white-space: nowrap;
}
.x-axis{
    margin-top: 7px;
    display: flex;
    justify-content: space-between;
}
.x-axis span{
    width: 0;
    display: flex;
    justify-content: center;
}
.x-axis span:first-child{
    justify-content: flex-start;
}
.content h3{
    padding: 48px 24px 0;
    height: 120px;
    font-size: 29px;
    line-height: 76px;
    color: #666;
}
.app{
    display: flex;
    align-items: center;
    padding: 44px 24px 28px 28px;
}
.app-icon{
    width: 72px;
    height: 72px;
}
.app-body{
    flex: 1;
    margin: 0 32px 0 36px;
}
.app-line{
    display: flex;
    justify-content: space-between;
    margin-bottom: 29px;
    line-height: 36px;
}
.app-time{
    font-size: 29px;
    line-height: 32px;
    color: #666;
}
.bar{
    height: 8px;
    border-radius: 4px;
    background: #e5e5e5;
}
.bar div{
    height: 8px;
    border-radius: 4px;
    background: #2659ec;
}
.box-text{
    font: 600 5px Inter, sans-serif;
    fill: #fff;
}
.gallery-text{
    font: 600 13px Inter, sans-serif;
    fill: #fff;
}
.ali-text{
    font: 500 12px Inter, sans-serif;
    fill: #fff;
}
```
